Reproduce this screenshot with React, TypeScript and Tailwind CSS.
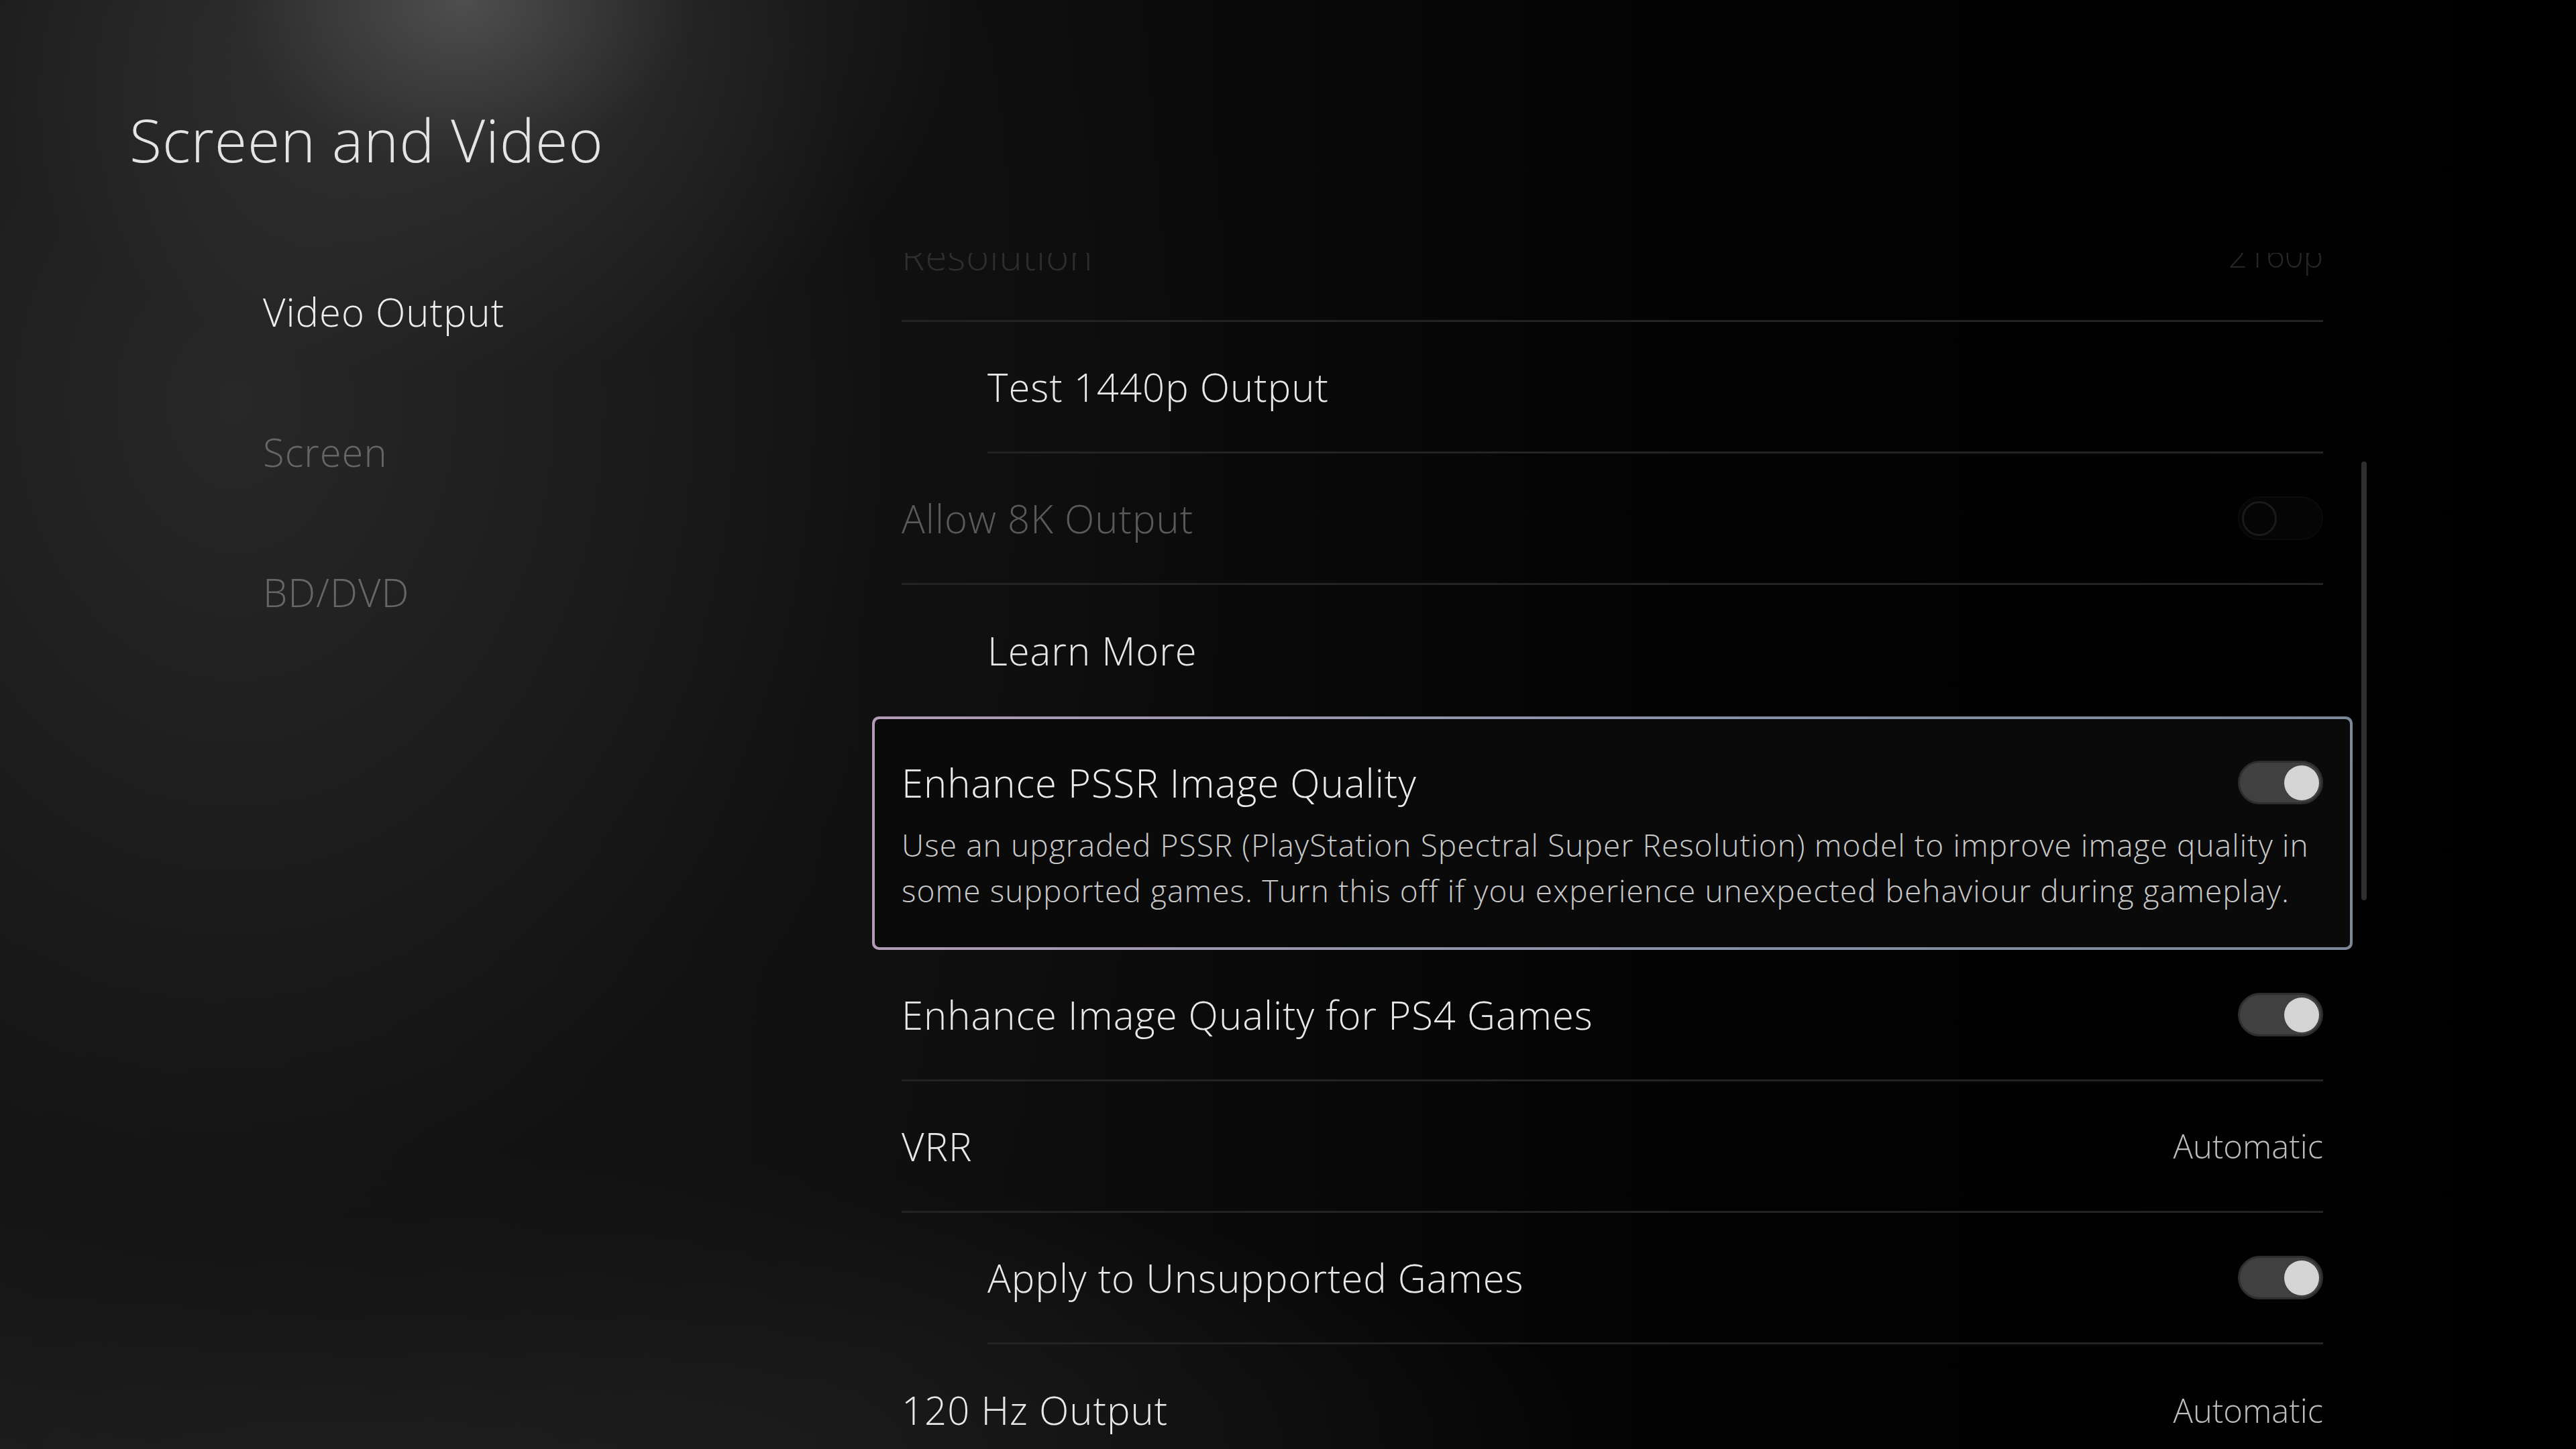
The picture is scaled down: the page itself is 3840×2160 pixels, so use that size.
import React from 'react'

type Row = {
  label: string
  value?: string
  toggle?: 'on' | 'disabled'
  indent?: boolean
  tone?: 'normal' | 'faded' | 'disabled'
  sep?: boolean
  first?: boolean
}

const topRows: Row[] = [
  { label: 'Resolution', value: '2160p', tone: 'faded', sep: true, first: true },
  { label: 'Test 1440p Output', indent: true, sep: true },
  { label: 'Allow 8K Output', toggle: 'disabled', tone: 'disabled', sep: true },
  { label: 'Learn More', indent: true },
]

const bottomRows: Row[] = [
  { label: 'Enhance Image Quality for PS4 Games', toggle: 'on', sep: true },
  { label: 'VRR', value: 'Automatic', sep: true },
  { label: 'Apply to Unsupported Games', indent: true, toggle: 'on', sep: true },
  { label: '120 Hz Output', value: 'Automatic' },
]

const Toggle = ({ state }: { state: 'on' | 'disabled' }) => {
  if (state === 'disabled') {
    return (
      <div className="flex h-[65px] w-[127px] items-center rounded-full border-[2px] border-[#0b0b0b] bg-[#050505] pl-[4px]">
        <div className="h-[52px] w-[52px] rounded-full border-[3px] border-[#1a1a1a]" />
      </div>
    )
  }
  return (
    <div className="flex h-[65px] w-[127px] items-center justify-end rounded-full border-[3px] border-[#2e2e2e] bg-[#404040] pr-[3px]">
      <div className="h-[52px] w-[52px] rounded-full bg-[#d4d4d4]" />
    </div>
  )
}

const SettingRow = ({ row }: { row: Row }) => {
  const textColor =
    row.tone === 'faded'
      ? 'text-[#2e2e2e]'
      : row.tone === 'disabled'
        ? 'text-[#5a5a5a]'
        : 'text-[#e8e8e8]'
  return (
    <div
      className={`mr-[44px] flex h-[196px] shrink-0 items-center justify-between ${
        row.indent ? 'ml-[172px]' : 'ml-[44px]'
      } ${row.sep ? 'border-b-[3px] border-[#232323]' : ''} ${row.first ? '-mt-[93px]' : ''}`}
    >
      <span className={`text-[58px] leading-none tracking-[1px] ${textColor}`}>{row.label}</span>
      {row.value && (
        <span
          className={`text-[49px] leading-none ${
            row.tone === 'faded' ? 'text-[#262626]' : 'text-[#bdbdbd]'
          }`}
        >
          {row.value}
        </span>
      )}
      {row.toggle && <Toggle state={row.toggle} />}
    </div>
  )
}

const FocusedRow = () => (
  <div className="shrink-0 rounded-[10px] bg-[image:linear-gradient(95deg,#b39cb6_0%,#9b97b0_25%,#8590a6_60%,#7c8799_100%)] p-[4px]">
    <div className="rounded-[7px] bg-[#0a0a0b] px-[40px] pt-[62px] pb-[51px]">
      <div className="flex h-[65px] items-center justify-between">
        <span className="text-[58px] leading-none tracking-[1px] text-[#ececec]">
          Enhance PSSR Image Quality
        </span>
        <Toggle state="on" />
      </div>
      <p className="mt-[26px] text-[46px] leading-[68px] tracking-[1.1px] text-[#c9c9c9]">
        <span className="block whitespace-nowrap">
          Use an upgraded PSSR (PlayStation Spectral Super Resolution) model to improve image
          quality in
        </span>
        <span className="block whitespace-nowrap">
          some supported games. Turn this off if you experience unexpected behaviour during
          gameplay.
        </span>
      </p>
    </div>
  </div>
)

const navItems = [
  { label: 'Video Output', active: true },
  { label: 'Screen', active: false },
  { label: 'BD/DVD', active: false },
]

export default function App() {
  return (
    <div
      className="flex h-[2160px] w-[3840px] overflow-hidden bg-[#000] bg-[image:radial-gradient(ellipse_760px_560px_at_690px_0px,rgba(120,120,120,0.55)_0%,rgba(80,80,80,0.25)_45%,transparent_100%),radial-gradient(ellipse_1500px_1900px_at_350px_600px,#282828_0%,#1b1b1b_40%,rgba(18,18,18,0.6)_65%,transparent_100%),radial-gradient(ellipse_1900px_450px_at_500px_2160px,rgba(38,38,38,0.8)_0%,transparent_100%),linear-gradient(90deg,#171717_0%,#0d0d0d_40%,#030303_65%,#000_100%)] font-['Open_Sans','Noto_Sans',sans-serif] font-light"
    >
      <aside className="w-[1300px] shrink-0 pt-[164px] pl-[193px]">
        <h1 className="text-[88px] leading-none font-light tracking-[0.9px] text-[#e4e4e4]">
          Screen and Video
        </h1>
        <nav className="mt-[184px] flex flex-col gap-[151px] pl-[199px]">
          {navItems.map((item) => (
            <span
              key={item.label}
              className={`text-[58px] leading-none tracking-[1px] ${
                item.active ? 'text-[#ededed]' : 'text-[#666666]'
              }`}
            >
              {item.label}
            </span>
          ))}
        </nav>
      </aside>

      <main className="flex gap-[13px] pt-[377px]">
        <div className="flex h-[1783px] w-[2207px] flex-col overflow-hidden">
          {topRows.map((row) => (
            <SettingRow key={row.label} row={row} />
          ))}
          <FocusedRow />
          {bottomRows.map((row) => (
            <SettingRow key={row.label} row={row} />
          ))}
        </div>
        <div className="mt-[311px] h-[654px] w-[8px] rounded-full bg-[#2e2e2e]" />
      </main>
    </div>
  )
}
